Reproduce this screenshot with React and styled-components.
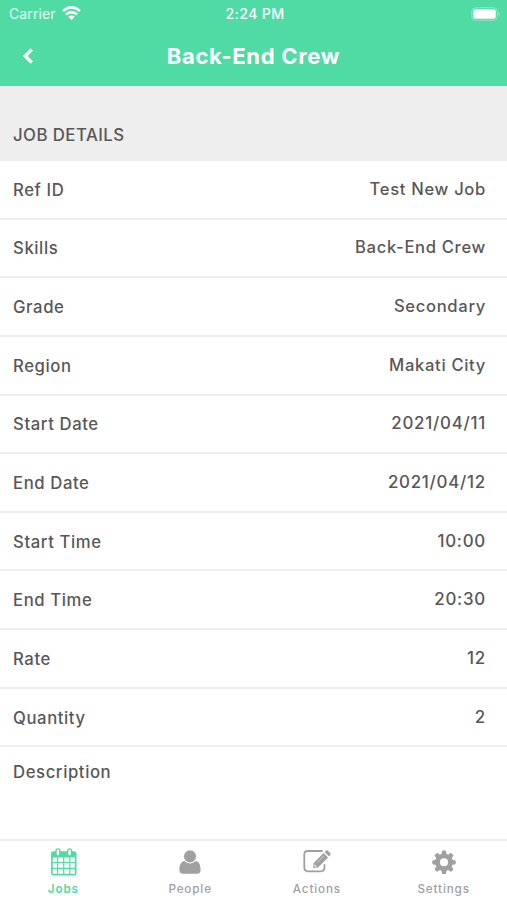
import React from 'react';
import styled, {createGlobalStyle} from 'styled-components';

const GlobalStyle = createGlobalStyle`
  * {
    box-sizing: border-box;
  }
  body {
    margin: 0;
    background: #fff;
    font-family: Inter, "Liberation Sans", sans-serif;
    color: #585858;
  }
  svg {
    display: block;
  }
`;

const Screen = styled.div`
  width: 100%;
  height: 900px;
  display: flex;
  flex-direction: column;
  overflow: hidden;
`;

const Header = styled.header`
  height: 86px;
  flex: none;
  background: #50dba4;
  color: #fff;
`;

const StatusBar = styled.div`
  height: 27px;
  padding: 0 6px 0 9px;
  display: grid;
  grid-template-columns: 1fr auto 1fr;
  align-items: center;
  font-size: 14px;
  line-height: 28px;
`;

const Carrier = styled.div`
  display: flex;
  align-items: center;
  gap: 6px;
  color: #e4fff4;
  letter-spacing: 0.1px;
  svg {
    margin-bottom: 2px;
  }
`;

const Clock = styled.div`
  font-weight: 500;
  font-size: 14.2px;
  letter-spacing: 0.35px;
`;

const Battery = styled.div`
  justify-self: end;
  padding-bottom: 1px;
`;

const NavBar = styled.div`
  height: 58px;
  padding: 0 22px;
  display: grid;
  grid-template-columns: 40px 1fr 40px;
  align-items: center;
`;

const BackButton = styled.button`
  padding: 0;
  border: 0;
  background: none;
  color: inherit;
`;

const Title = styled.h1`
  margin: 0;
  text-align: center;
  font-size: 22px;
  line-height: 56px;
  font-weight: 700;
  letter-spacing: 0.7px;
`;

const SectionHeader = styled.h2`
  height: 75px;
  flex: none;
  margin: 0;
  padding: 37px 13px 0;
  background: #eee;
  font-size: 16.8px;
  line-height: 24px;
  font-weight: 450;
  letter-spacing: 0.45px;
`;

const List = styled.dl`
  flex: 1;
  margin: 0;
`;

const Row = styled.div`
  height: ${props => props.$last ? '49px' : '58.65px'};
  padding: 1px 21px 0 13px;
  display: flex;
  align-items: center;
  justify-content: space-between;
  border-bottom: ${props => props.$last ? '0' : '2px solid #efefef'};
`;

const Label = styled.dt`
  font-size: 16.7px;
  line-height: 24px;
  font-weight: 460;
  letter-spacing: 0.6px;
`;

const Value = styled.dd`
  margin: 0 0 2px;
  font-size: ${props => props.$numeric ? '16.9px' : '16.6px'};
  line-height: 24px;
  font-weight: 460;
  letter-spacing: ${props => props.$numeric ? '0.75px' : '0.68px'};
`;

const TabBar = styled.nav`
  height: 61px;
  flex: none;
  display: grid;
  grid-template-columns: repeat(4, 1fr);
  border-top: 2px solid #eee;
`;

const Tab = styled.div`
  padding-top: 7px;
  display: flex;
  flex-direction: column;
  align-items: center;
  gap: 5px;
  color: ${props => props.$active ? '#50dba4' : '#a0a0a0'};
  font-size: 11.7px;
  line-height: 16px;
  font-weight: ${props => props.$active ? 600 : 500};
  letter-spacing: 0.85px;
`;

const WifiIcon = () => (
  <svg width="19" height="15" viewBox="0 0 19 15" fill="none" stroke="#fff" strokeWidth="2.6">
    <path d="M1 5.1Q9.5-2.3 18 5.1"/>
    <path d="M4 8.5Q9.5 3.6 15 8.5"/>
    <path d="M6.3 10.8Q9.5 8.3 12.7 10.8L9.5 14Z" fill="#fff" stroke="none"/>
  </svg>
);

const BatteryIcon = () => (
  <svg width="30" height="14" viewBox="0 0 30 14">
    <rect x="0.7" y="0.7" width="25.6" height="12.6" rx="3.6" fill="none" stroke="#8ae8c3" strokeWidth="1"/>
    <rect x="2.2" y="2.3" width="22.5" height="9.4" rx="2" fill="#fff"/>
    <path d="M27.7 5Q29.8 7 27.7 9Z" fill="#a0eed0"/>
  </svg>
);

const BackIcon = () => (
  <svg width="12" height="16" viewBox="0 0 12 16" fill="none" stroke="#fff" strokeWidth="3.3">
    <path d="M9.8 1.5L3.2 8L9.8 14.5"/>
  </svg>
);

const CalendarIcon = () => (
  <svg width="28" height="28" viewBox="0 0 28 28">
    <path
      fillRule="evenodd"
      fill="currentColor"
      d="M4.5 3.2H25Q27.5 3.2 27.5 5.7V25Q27.5 27.5 25 27.5H4.5Q2 27.5 2 25V5.7Q2 3.2 4.5 3.2ZM3.7 9.4V13.9H8V9.4ZM9.2 9.4V13.9H14.1V9.4ZM15.3 9.4V13.9H20.2V9.4ZM21.4 9.4V13.9H25.8V9.4ZM3.7 15.1V19.8H8V15.1ZM9.2 15.1V19.8H14.1V15.1ZM15.3 15.1V19.8H20.2V15.1ZM21.4 15.1V19.8H25.8V15.1ZM3.7 21V25.8H8V21ZM9.2 21V25.8H14.1V21ZM15.3 21V25.8H20.2V21ZM21.4 21V25.8H25.8V21Z"
    />
    <rect x="7" y="0.9" width="3.8" height="7" rx="1.9" fill="#fff" stroke="currentColor" strokeWidth="1.4"/>
    <rect x="18.7" y="0.9" width="3.8" height="7" rx="1.9" fill="#fff" stroke="currentColor" strokeWidth="1.4"/>
  </svg>
);

const PersonIcon = () => (
  <svg width="28" height="28" viewBox="0 0 28 28" fill="currentColor">
    <path d="M8.4 13Q14 18 19.6 13C23.3 13.5 24.6 17.6 24.6 21.7Q24.6 25.8 21 25.8H7Q3.4 25.8 3.4 21.7C3.4 17.6 4.7 13.5 8.4 13Z"/>
    <circle cx="14" cy="8.4" r="6.3" stroke="#fff" strokeWidth="0.5"/>
  </svg>
);

const EditIcon = () => (
  <svg width="28" height="28" viewBox="0 0 28 28">
    <path
      d="M19 3H5Q1.3 3 1.3 6.5V19.6Q1.3 23.3 5 23.3H17.8Q21.5 23.3 21.5 19.6V17"
      fill="none"
      stroke="currentColor"
      strokeWidth="1.8"
      strokeLinecap="round"
    />
    <path d="M10.6 15.1L20.6 5.1L25 9.5L15 19.5L10.2 20.1Z" fill="currentColor"/>
    <path d="M21.6 4.1L23.2 2.5Q24 1.9 24.8 2.6L27.4 5.2Q28 6 27.4 6.8L26 8.4Z" fill="currentColor"/>
    <path d="M13.6 15.2L20.6 8.2" stroke="#fff" strokeWidth="0.5"/>
    <path d="M11.5 16.5V18.8H13.8L12.8 17.4Z" fill="#fff"/>
  </svg>
);

const teeth = [0, 45, 90, 135, 180, 225, 270, 315];

const GearIcon = () => (
  <svg width="28" height="28" viewBox="0 0 28 28">
    <g transform="translate(14 14.3)">
      <circle r="6.4" fill="none" stroke="currentColor" strokeWidth="4.7"/>
      {teeth.map(angle => (
        <path
          key={angle}
          d="M-2.7-7.8L-1.9-11.2Q-1.8-11.7-1.2-11.7H1.2Q1.8-11.7 1.9-11.2L2.7-7.8Z"
          transform={`rotate(${angle})`}
          fill="currentColor"
        />
      ))}
    </g>
  </svg>
);

const details = [
  ['Ref ID', 'Test New Job'],
  ['Skills', 'Back-End Crew'],
  ['Grade', 'Secondary'],
  ['Region', 'Makati City'],
  ['Start Date', '2021/04/11'],
  ['End Date', '2021/04/12'],
  ['Start Time', '10:00'],
  ['End Time', '20:30'],
  ['Rate', '12'],
  ['Quantity', '2'],
  ['Description', ''],
];

const tabs = [
  {name: 'Jobs', Icon: CalendarIcon},
  {name: 'People', Icon: PersonIcon},
  {name: 'Actions', Icon: EditIcon},
  {name: 'Settings', Icon: GearIcon},
];

const App = () => (
  <Screen>
    <GlobalStyle/>
    <Header>
      <StatusBar>
        <Carrier>Carrier <WifiIcon/></Carrier>
        <Clock>2:24 PM</Clock>
        <Battery><BatteryIcon/></Battery>
      </StatusBar>
      <NavBar>
        <BackButton aria-label="Back"><BackIcon/></BackButton>
        <Title>Back-End Crew</Title>
      </NavBar>
    </Header>
    <SectionHeader>JOB DETAILS</SectionHeader>
    <List>
      {details.map(([label, value]) => (
        <Row key={label} $last={label === 'Description'}>
          <Label>{label}</Label>
          {value && <Value $numeric={/^\d/.test(value)}>{value}</Value>}
        </Row>
      ))}
    </List>
    <TabBar>
      {tabs.map(({name, Icon}) => (
        <Tab key={name} $active={name === 'Jobs'}>
          <Icon/>
          {name}
        </Tab>
      ))}
    </TabBar>
  </Screen>
);

export default App;
